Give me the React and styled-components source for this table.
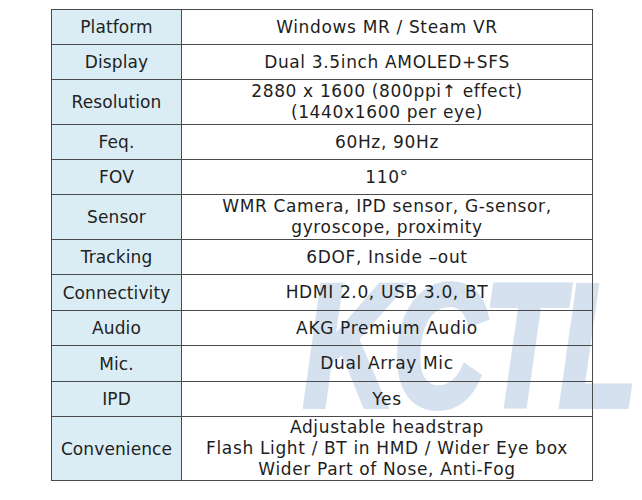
import React from "react";
import styled, { createGlobalStyle } from "styled-components";

const Global = createGlobalStyle`
  html, body { margin: 0; padding: 0; background: #ffffff; }
  body { font-family: "DejaVu Sans", Verdana, sans-serif; color: #222; }
`;

const Page = styled.div`
  position: relative;
  width: 642px;
  height: 500px;
  padding: 9px 0 0 51px;
  box-sizing: border-box;
  overflow: hidden;
`;

const Watermark = styled.div`
  position: absolute;
  left: 303px;
  top: 258px;
  font-family: "Liberation Sans", Arial, sans-serif;
  font-weight: 700;
  font-style: italic;
  font-size: 175px;
  line-height: 1;
  letter-spacing: -3px;
  color: #d5e1ef;
  -webkit-text-stroke: 6px #d5e1ef;
  transform: scaleX(0.73);
  transform-origin: left top;
  z-index: 0;
  user-select: none;
`;

const Table = styled.table`
  position: relative;
  z-index: 1;
  width: 542px;
  border-collapse: collapse;
  table-layout: fixed;
`;

const Row = styled.tr`
  height: ${(p) => p.$h}px;
`;

const LabelCell = styled.td`
  width: 129px;
  background: #dbedf4;
  border: 1.5px solid #4a4a4a;
  text-align: center;
  vertical-align: middle;
  font-size: 17px;
  letter-spacing: 0.1px;
  padding: 0;
  color: #222;
`;

const ValueCell = styled.td`
  border: 1.5px solid #4a4a4a;
  text-align: center;
  vertical-align: middle;
  font-size: 17px;
  letter-spacing: 0.65px;
  line-height: 21px;
  padding: 0;
  color: #1e1e1e;
`;

const Line = styled.div`
  white-space: nowrap;
`;

const rows = [
  ["Platform", ["Windows MR / Steam VR"], 35],
  ["Display", ["Dual 3.5inch AMOLED+SFS"], 35],
  ["Resolution", ["2880 x 1600 (800ppi\u2191 effect)", "(1440x1600 per eye)"], 45],
  ["Feq.", ["60Hz, 90Hz"], 35],
  ["FOV", ["110\u00B0"], 35],
  ["Sensor", ["WMR Camera, IPD sensor, G-sensor,", "gyroscope, proximity"], 45],
  ["Tracking", ["6DOF, Inside \u2013out"], 35],
  ["Connectivity", ["HDMI 2.0, USB 3.0, BT"], 36],
  ["Audio", ["AKG Premium Audio"], 35],
  ["Mic.", ["Dual Array Mic"], 36],
  ["IPD", ["Yes"], 35],
  [
    "Convenience",
    ["Adjustable headstrap", "Flash Light / BT in HMD / Wider Eye box", "Wider Part of Nose, Anti-Fog"],
    64,
  ],
];

export default function App() {
  return (
    <>
      <Global />
      <Page>
        <Watermark aria-hidden="true">KCTL</Watermark>
        <Table>
          <tbody>
            {rows.map(([label, lines, h]) => (
              <Row key={label} $h={h}>
                <LabelCell>{label}</LabelCell>
                <ValueCell>
                  {lines.map((l) => (
                    <Line key={l}>{l}</Line>
                  ))}
                </ValueCell>
              </Row>
            ))}
          </tbody>
        </Table>
      </Page>
    </>
  );
}
